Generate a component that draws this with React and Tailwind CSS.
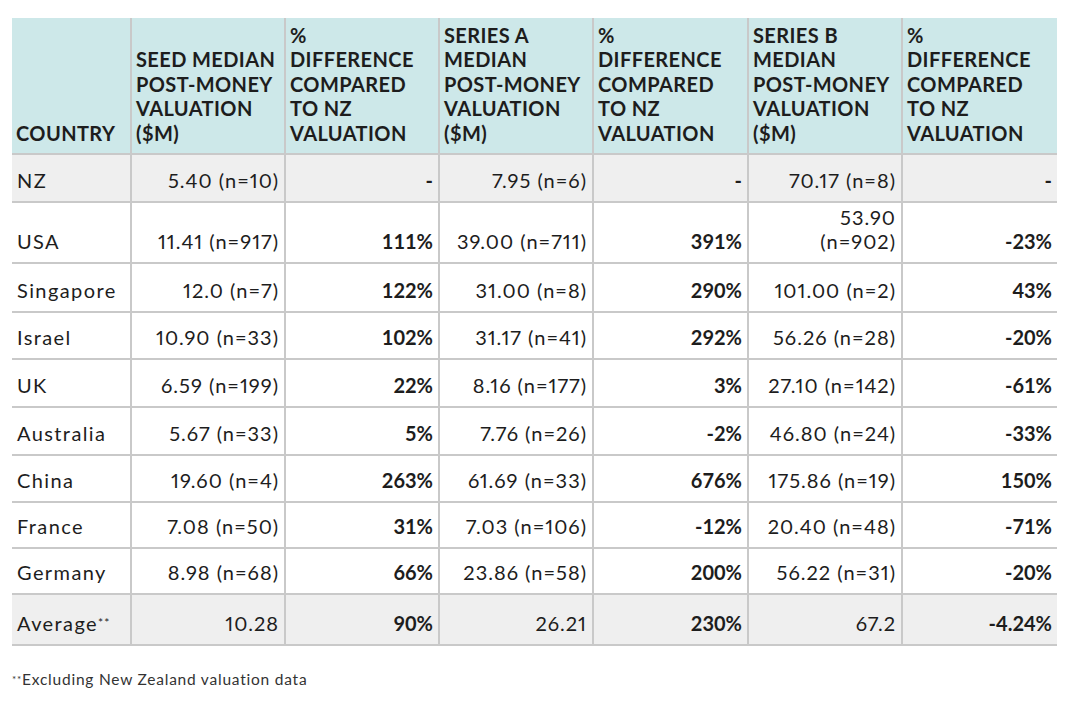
const rows = [
  { c: "NZ", s: "5.40 (n=10)", sp: "-", a: "7.95 (n=6)", ap: "-", b: "70.17 (n=8)", bp: "-", shade: true, h: "h-[48px]" },
  { c: "USA", s: "11.41 (n=917)", sp: "111%", a: "39.00 (n=711)", ap: "391%", b: ["53.90", "(n=902)"], bp: "-23%", h: "h-[61px]" },
  { c: "Singapore", s: "12.0 (n=7)", sp: "122%", a: "31.00 (n=8)", ap: "290%", b: "101.00 (n=2)", bp: "43%", h: "h-[49px]" },
  { c: "Israel", s: "10.90 (n=33)", sp: "102%", a: "31.17 (n=41)", ap: "292%", b: "56.26 (n=28)", bp: "-20%", h: "h-[47px]" },
  { c: "UK", s: "6.59 (n=199)", sp: "22%", a: "8.16 (n=177)", ap: "3%", b: "27.10 (n=142)", bp: "-61%", h: "h-[48px]" },
  { c: "Australia", s: "5.67 (n=33)", sp: "5%", a: "7.76 (n=26)", ap: "-2%", b: "46.80 (n=24)", bp: "-33%", h: "h-[48px]" },
  { c: "China", s: "19.60 (n=4)", sp: "263%", a: "61.69 (n=33)", ap: "676%", b: "175.86 (n=19)", bp: "150%", h: "h-[47px]" },
  { c: "France", s: "7.08 (n=50)", sp: "31%", a: "7.03 (n=106)", ap: "-12%", b: "20.40 (n=48)", bp: "-71%", h: "h-[46px]" },
  { c: "Germany", s: "8.98 (n=68)", sp: "66%", a: "23.86 (n=58)", ap: "200%", b: "56.22 (n=31)", bp: "-20%", h: "h-[46px]" },
  { c: "Average", s: "10.28", sp: "90%", a: "26.21", ap: "230%", b: "67.2", bp: "-4.24%", shade: true, avg: true, h: "h-[51px]" },
];

const headers = [
  ["COUNTRY"],
  ["SEED MEDIAN", "POST-MONEY", "VALUATION", "($M)"],
  ["%", "DIFFERENCE", "COMPARED", "TO NZ", "VALUATION"],
  ["SERIES A", "MEDIAN", "POST-MONEY", "VALUATION", "($M)"],
  ["%", "DIFFERENCE", "COMPARED", "TO NZ", "VALUATION"],
  ["SERIES B", "MEDIAN", "POST-MONEY", "VALUATION", "($M)"],
  ["%", "DIFFERENCE", "COMPARED", "TO NZ", "VALUATION"],
];

const cell = "border-2 border-[#c9c9c9] align-bottom px-[5px] pb-[9px] whitespace-nowrap";

export default function App() {
  return (
    <div className="bg-white w-[1072px] h-[703px] pt-[18px] pl-[12px] text-[#1d1d1d]" style={{ fontFamily: "Lato, 'Open Sans', sans-serif" }}>
      <table className="border-collapse table-fixed w-[1045px] text-[20px] leading-[24px]">
        <colgroup>
          <col className="w-[119px]" />
          <col className="w-[154px]" />
          <col className="w-[154px]" />
          <col className="w-[154px]" />
          <col className="w-[155px]" />
          <col className="w-[154px]" />
          <col className="w-[155px]" />
        </colgroup>
        <thead>
          <tr className="h-[136px] bg-[#cde8e9]">
            {headers.map((lines, i) => (
              <th
                key={i}
                className={`border-2 border-t-0 border-[#c9c9c9] align-bottom text-left font-bold px-[4px] pb-[8px] tracking-[0.02em] leading-[24.5px] whitespace-nowrap ${i === 0 ? "border-l-0" : ""} ${i === 6 ? "border-r-0" : ""}`}
              >
                {lines.map((l, j) => (
                  <div key={j}>{l}</div>
                ))}
              </th>
            ))}
          </tr>
        </thead>
        <tbody>
          {rows.map((r) => (
            <tr key={r.c} className={`${r.h} ${r.shade ? "bg-[#efefef]" : "bg-white"}`}>
              <td className={`${cell} border-l-0 text-left tracking-[0.07em]`}>
                {r.c}
                {r.avg && <sup className="text-[12px] tracking-[0.1em] relative -top-[4px]">**</sup>}
              </td>
              <td className={`${cell} text-right tracking-[0.05em] proportional-nums`}>{r.s}</td>
              <td className={`${cell} text-right font-bold`}>{r.sp}</td>
              <td className={`${cell} text-right tracking-[0.05em] proportional-nums`}>{r.a}</td>
              <td className={`${cell} text-right font-bold`}>{r.ap}</td>
              <td className={`${cell} text-right tracking-[0.05em] proportional-nums`}>
                {Array.isArray(r.b) ? r.b.map((l) => <div key={l}>{l}</div>) : r.b}
              </td>
              <td className={`${cell} border-r-0 text-right font-bold`}>{r.bp}</td>
            </tr>
          ))}
        </tbody>
      </table>
      <p className="mt-[22px] text-[15.5px] tracking-[0.05em] text-[#333]">
        <sup className="text-[10px] relative -top-[2px]">**</sup>Excluding New Zealand valuation data
      </p>
    </div>
  );
}
